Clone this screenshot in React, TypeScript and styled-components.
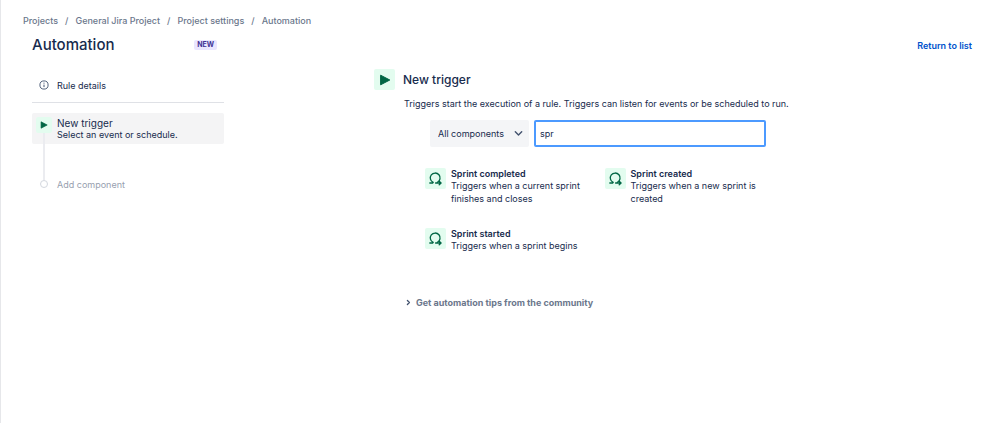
import React from "react";
import styled, { createGlobalStyle } from "styled-components";

const GlobalStyle = createGlobalStyle`
  *, *::before, *::after { box-sizing: border-box; }
  body {
    margin: 0;
    background: #fff;
    color: #172b4d;
    font: 400 9px/13px Inter, "Liberation Sans", sans-serif;
  }
  h1, h2, h3, p, ol, ul { margin: 0; padding: 0; }
  ol, ul { list-style: none; }
  a { color: inherit; text-decoration: none; }
  button, input, select { font: inherit; color: inherit; }
`;

const Page = styled.div`
  min-height: 100vh;
  padding: 14px 26px 24px 22px;
  border-left: 1px solid #e6e7ea;
`;

const Crumbs = styled.ol`
  display: flex;
  font-weight: 500;
  line-height: 14px;
  color: #6b778c;

  li + li::before {
    content: "/";
    margin: 0 7px;
  }
`;

const Header = styled.header`
  display: flex;
  align-items: center;
  justify-content: space-between;
  margin: 7px 0 0 9px;
`;

const TitleGroup = styled.div`
  display: flex;
  align-items: center;
  justify-content: space-between;
  width: 185px;
`;

const Title = styled.h1`
  font-size: 15px;
  line-height: 20px;
  font-weight: 500;
`;

const Lozenge = styled.span`
  padding: 0 3px;
  border-radius: 2px;
  background: #eae6ff;
  color: #403294;
  font-size: 7px;
  line-height: 10px;
  font-weight: 700;
`;

const ReturnLink = styled.a`
  color: #0052cc;
  font-weight: 600;
`;

const Columns = styled.div`
  display: flex;
  align-items: flex-start;
  margin: 14px 0 0 9px;
`;

const Sidebar = styled.nav`
  flex: 0 0 192px;
  padding-top: 2px;
`;

const StepButton = styled.button<{ $active?: boolean; $muted?: boolean }>`
  display: grid;
  grid-template-columns: 16px 1fr;
  column-gap: 5px;
  align-items: center;
  width: 100%;
  padding: 4px;
  border: 0;
  border-radius: 2px;
  text-align: left;
  cursor: pointer;
  background: ${(p) => (p.$active ? "#f4f4f5" : "transparent")};
  color: ${(p) => (p.$muted ? "#97a0af" : "#172b4d")};
`;

const DetailsRow = styled.div`
  padding: 2px 0 5px;
  margin-bottom: 10px;
  border-bottom: 1px solid #dfe1e6;
`;

const StepIcon = styled.span`
  display: flex;
  align-items: center;
  justify-content: center;
  height: 16px;
`;

const ActiveStep = styled(StepButton)`
  align-items: start;
  padding: 4px 4px 3px;
`;

const StepTile = styled(StepIcon)`
  border-radius: 2px;
  background: #e3fcef;
`;

const StepText = styled.span`
  display: flex;
  flex-direction: column;
  line-height: 12px;
`;

const StepName = styled.span`
  font-size: 10px;
`;

const Steps = styled.ol`
  display: flex;
  flex-direction: column;
  gap: 28px;
  position: relative;
`;

const Connector = styled.li`
  position: absolute;
  top: 20px;
  bottom: 16px;
  left: 11px;
  width: 2px;
  background: #ebecf0;
`;

const Dot = styled.span`
  width: 8px;
  height: 8px;
  border: 1px solid #d3d7de;
  border-radius: 50%;
  background: #fff;
`;

const Content = styled.main`
  flex: 1;
  display: flex;
  justify-content: center;
`;

const Panel = styled.section`
  width: 448px;
`;

const PanelHeader = styled.div`
  display: flex;
  align-items: center;
  gap: 8px;
`;

const Tile = styled.span`
  display: flex;
  flex: 0 0 21px;
  align-items: center;
  justify-content: center;
  height: 21px;
  border-radius: 2px;
  background: #e3fcef;
`;

const PanelTitle = styled.h2`
  font-size: 12px;
  line-height: 20px;
  font-weight: 500;
`;

const Description = styled.p`
  margin: 7px 0 0 30px;
`;

const Filters = styled.form`
  display: flex;
  gap: 5px;
  margin: 10px 56px 0;
`;

const SelectWrap = styled.div`
  position: relative;
  flex: 0 0 99px;

  svg {
    position: absolute;
    top: 9px;
    right: 6px;
    pointer-events: none;
  }
`;

const Select = styled.select`
  appearance: none;
  width: 100%;
  height: 27px;
  padding: 0 20px 0 8px;
  border: 0;
  border-radius: 2px;
  background: #f4f5f7;
`;

const Search = styled.input`
  flex: 1;
  min-width: 0;
  height: 27px;
  padding: 0 4px;
  border: 2px solid #4c9aff;
  border-radius: 2px;
  background: #fff;
  outline: 0;
`;

const Results = styled.ul`
  display: grid;
  grid-template-columns: 1fr 1fr;
  row-gap: 23px;
  margin: 21px 38px 0 51px;
`;

const Result = styled.button`
  display: flex;
  align-items: flex-start;
  gap: 5px;
  width: 100%;
  padding: 0;
  border: 0;
  background: none;
  text-align: left;
  cursor: pointer;
`;

const ResultText = styled.span`
  display: flex;
  flex-direction: column;
  max-width: 138px;
`;

const ResultName = styled.span`
  font-weight: 600;
  line-height: 11px;
`;

const Tips = styled.button`
  display: flex;
  align-items: center;
  gap: 5px;
  margin: 44px 0 0 32px;
  padding: 0;
  border: 0;
  background: none;
  color: #6b778c;
  font-weight: 700;
  cursor: pointer;
`;

const PlayIcon = ({ size }: { size: number }) => (
  <svg width={size} height={size} viewBox="0 0 12 12" aria-hidden="true">
    <path d="M1.6 1.2v9.6L10.8 6z" fill="#006644" stroke="#006644" strokeLinejoin="round" />
  </svg>
);

const InfoIcon = () => (
  <svg width="10" height="10" viewBox="0 0 10 10" fill="none" stroke="#42526e" aria-hidden="true">
    <circle cx="5" cy="5" r="4.1" strokeWidth="0.9" />
    <path d="M5 4.6v2.5" />
    <circle cx="5" cy="3.1" r="0.6" fill="#42526e" stroke="none" />
  </svg>
);

const SprintIcon = () => (
  <svg
    width="15"
    height="15"
    viewBox="0 0 15 15"
    fill="none"
    stroke="#006644"
    strokeWidth="1.3"
    strokeLinecap="round"
    strokeLinejoin="round"
    aria-hidden="true"
  >
    <path d="M1.8 12H4.8L5.2 11.4A4.9 4.9 0 1 1 9.4 11.3" />
    <path d="M7.6 12H13M11.2 10.2L13.1 12L11.2 13.8" />
  </svg>
);

const ChevronDown = () => (
  <svg width="9" height="9" viewBox="0 0 9 9" fill="none" stroke="#42526e" strokeWidth="1.4" strokeLinecap="round" strokeLinejoin="round" aria-hidden="true">
    <path d="M1.3 2.8L4.5 6L7.7 2.8" />
  </svg>
);

const ChevronRight = () => (
  <svg width="5" height="7" viewBox="0 0 5 7" fill="none" stroke="#42526e" strokeWidth="1.3" strokeLinecap="round" strokeLinejoin="round" aria-hidden="true">
    <path d="M1.4 1.5L3.4 3.5L1.4 5.5" />
  </svg>
);

const crumbs = ["Projects", "General Jira Project", "Project settings", "Automation"];

const triggers = [
  { name: "Sprint completed", text: "Triggers when a current sprint finishes and closes" },
  { name: "Sprint created", text: "Triggers when a new sprint is created" },
  { name: "Sprint started", text: "Triggers when a sprint begins" },
];

export default function App() {
  return (
    <Page>
      <GlobalStyle />
      <nav aria-label="Breadcrumb">
        <Crumbs>
          {crumbs.map((crumb) => (
            <li key={crumb}>
              <a href="#">{crumb}</a>
            </li>
          ))}
        </Crumbs>
      </nav>
      <Header>
        <TitleGroup>
          <Title>Automation</Title>
          <Lozenge>NEW</Lozenge>
        </TitleGroup>
        <ReturnLink href="#">Return to list</ReturnLink>
      </Header>
      <Columns>
        <Sidebar aria-label="Rule">
          <DetailsRow>
            <StepButton type="button">
              <StepIcon>
                <InfoIcon />
              </StepIcon>
              Rule details
            </StepButton>
          </DetailsRow>
          <Steps>
            <li>
              <ActiveStep type="button" $active>
                <StepTile>
                  <PlayIcon size={8} />
                </StepTile>
                <StepText>
                  <StepName>New trigger</StepName>
                  <span>Select an event or schedule.</span>
                </StepText>
              </ActiveStep>
            </li>
            <li>
              <StepButton type="button" $muted>
                <StepIcon>
                  <Dot />
                </StepIcon>
                Add component
              </StepButton>
            </li>
            <Connector aria-hidden="true" />
          </Steps>
        </Sidebar>
        <Content>
          <Panel>
            <PanelHeader>
              <Tile>
                <PlayIcon size={12} />
              </Tile>
              <PanelTitle>New trigger</PanelTitle>
            </PanelHeader>
            <Description>
              Triggers start the execution of a rule. Triggers can listen for events or be scheduled to run.
            </Description>
            <Filters onSubmit={(e) => e.preventDefault()}>
              <SelectWrap>
                <Select aria-label="Component type" defaultValue="all">
                  <option value="all">All components</option>
                </Select>
                <ChevronDown />
              </SelectWrap>
              <Search type="text" aria-label="Search triggers" defaultValue="spr" />
            </Filters>
            <Results>
              {triggers.map((trigger) => (
                <li key={trigger.name}>
                  <Result type="button">
                    <Tile>
                      <SprintIcon />
                    </Tile>
                    <ResultText>
                      <ResultName>{trigger.name}</ResultName>
                      <span>{trigger.text}</span>
                    </ResultText>
                  </Result>
                </li>
              ))}
            </Results>
            <Tips type="button" aria-expanded="false">
              <ChevronRight />
              Get automation tips from the community
            </Tips>
          </Panel>
        </Content>
      </Columns>
    </Page>
  );
}
